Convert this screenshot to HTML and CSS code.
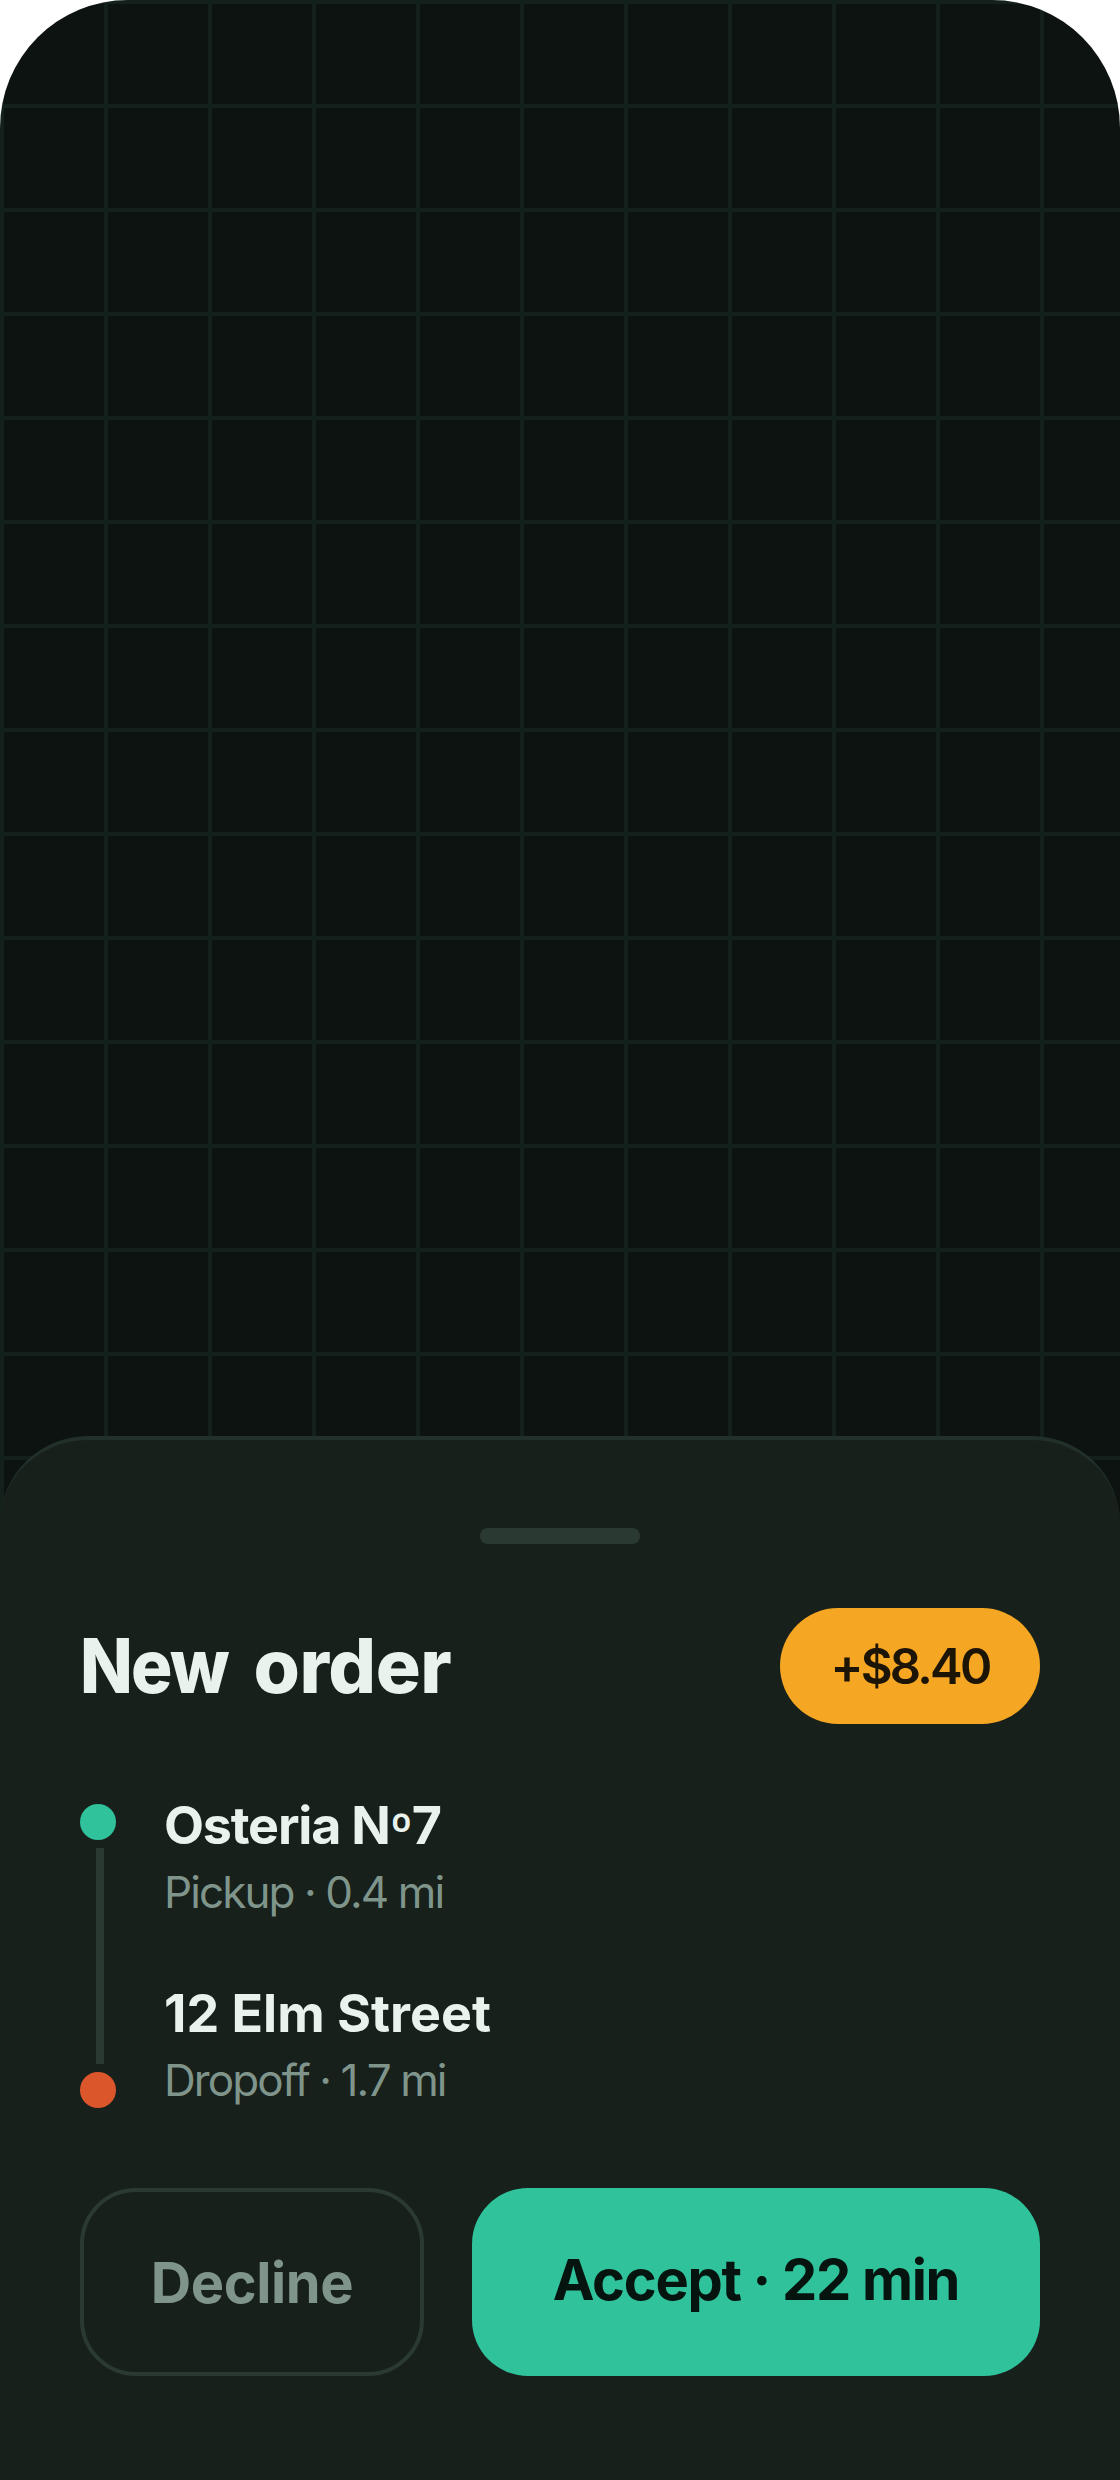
FILE: index.html
```html
<!DOCTYPE html>
<html lang="en">
<head>
<meta charset="utf-8">
<title>New order</title>
<link rel="stylesheet" href="styles.css">
</head>
<body>
<main class="phone">
  <section class="sheet">
    <div class="handle"></div>
    <header class="header">
      <h1 class="title"><span class="title-lead">New</span> order</h1>
      <span class="badge">+$8.40</span>
    </header>
    <div class="route">
      <div class="track">
        <span class="dot dot-pickup"></span>
        <span class="line"></span>
        <span class="dot dot-dropoff"></span>
      </div>
      <div class="stops">
        <div class="stop">
          <div class="place place-pickup">Osteria N<span class="ordinal">º</span>7</div>
          <div class="meta">Pickup · 0.4 mi</div>
        </div>
        <div class="stop">
          <div class="place">12 Elm Street</div>
          <div class="meta">Dropoff · 1.7 mi</div>
        </div>
      </div>
    </div>
    <div class="actions">
      <button class="btn decline">Decline</button>
      <button class="btn accept">Accept · 22 min</button>
    </div>
  </section>
</main>
</body>
</html>
```
FILE: styles.css
```css
* { box-sizing: border-box; }
body { margin: 0; background: #fff; font-family: Inter, "Liberation Sans", sans-serif; }
.phone {
  width: 1120px;
  height: 2480px;
  display: flex;
  flex-direction: column;
  justify-content: flex-end;
  overflow: hidden;
  border-radius: 128px 128px 0 0;
  background-color: #0d1311;
  background-image:
    linear-gradient(#13201b 4px, transparent 4px),
    linear-gradient(90deg, #13201b 4px, transparent 4px);
  background-size: 104px 104px;
}
.sheet {
  height: 1044px;
  padding: 88px 80px 104px;
  border-top: 4px solid #22302a;
  border-radius: 88px 88px 0 0;
  background: #17201b;
  color: #e9f2ed;
}
.handle {
  width: 160px;
  height: 16px;
  margin: 0 auto 64px;
  border-radius: 8px;
  background: #2a3a33;
}
.header {
  height: 116px;
  display: flex;
  align-items: center;
  justify-content: space-between;
}
.title {
  margin: 0;
  font-size: 75px;
  line-height: 96px;
  font-weight: 800;
  letter-spacing: -0.5px;
  white-space: nowrap;
}
.title-lead {
  display: inline-block;
  margin-right: -3px;
  letter-spacing: -1.9px;
  transform: scaleX(0.92);
  transform-origin: left;
}
.badge {
  width: 260px;
  height: 116px;
  border-radius: 58px;
  background: #f5a623;
  color: #1c1405;
  font-size: 49px;
  line-height: 118px;
  font-weight: 600;
  letter-spacing: -2.8px;
  text-align: center;
}
.route {
  display: flex;
  gap: 48px;
  margin-top: 80px;
  height: 304px;
}
.track {
  width: 36px;
  display: flex;
  flex-direction: column;
  gap: 8px;
}
.dot { width: 36px; height: 36px; border-radius: 50%; }
.dot-pickup { background: #2fc29b; }
.dot-dropoff { background: #dc562c; }
.line { width: 8px; height: 216px; margin-left: 16px; background: #2a3a33; }
.stops { display: flex; flex-direction: column; gap: 56px; margin-top: -14px; }
.stop { height: 132px; white-space: nowrap; }
.place { font-size: 52px; line-height: 72px; font-weight: 700; }
.place-pickup { letter-spacing: -1.2px; }
.ordinal { font-size: 48px; line-height: 0; vertical-align: -4px; }
.meta { font-size: 44px; line-height: 60px; letter-spacing: -1.9px; color: #7f958b; }
.actions { display: flex; gap: 48px; margin-top: 80px; }
.btn {
  height: 188px;
  padding: 0;
  border: 0;
  border-radius: 56px;
  font: inherit;
  font-size: 56px;
  line-height: 72px;
  font-weight: 700;
  white-space: nowrap;
}
.decline {
  width: 344px;
  padding-top: 2px;
  border: 4px solid #2a3a33;
  background: transparent;
  color: #7f958b;
  letter-spacing: -0.4px;
}
.accept {
  width: 568px;
  padding-bottom: 5px;
  background: #2fc29b;
  color: #06140f;
  letter-spacing: -1.3px;
}
```
